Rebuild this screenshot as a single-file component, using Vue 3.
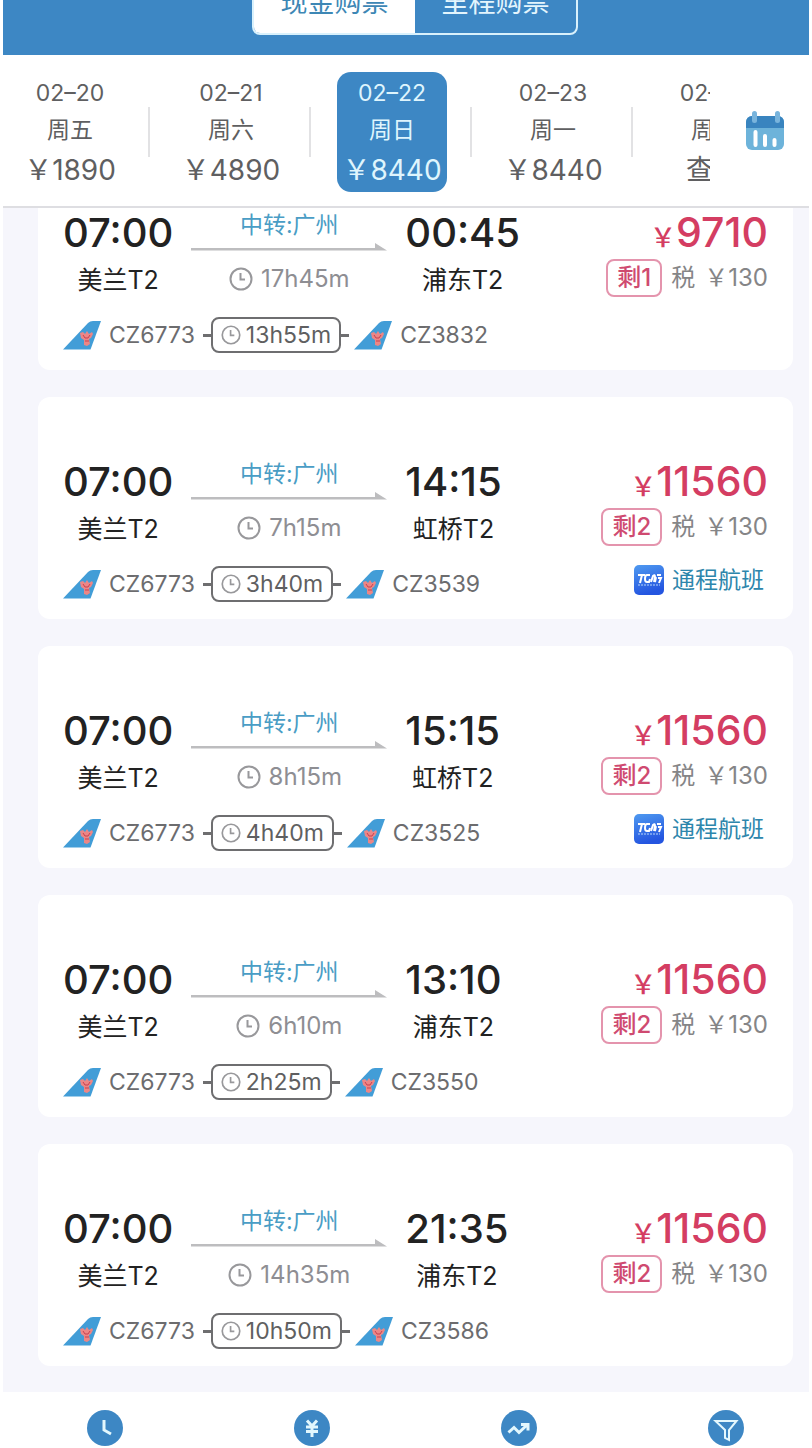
<template>
  <div class="page">
    <header class="header">
      <div class="segment">
        <button
          v-for="mode in modes"
          :key="mode"
          class="segment-btn"
          :class="{ active: mode === currentMode }"
          @click="currentMode = mode"
        >
          {{ mode }}
        </button>
      </div>
    </header>

    <nav class="dates">
      <div class="date-scroll">
        <div v-for="day in days" :key="day.date" class="date-cell">
          <button
            class="date-btn"
            :class="{ active: day.date === currentDate }"
            @click="currentDate = day.date"
          >
            <span class="date-day">{{ day.date }}</span>
            <span class="date-week">{{ day.week }}</span>
            <span class="date-price">{{ day.price }}</span>
          </button>
        </div>
      </div>
      <button class="calendar-btn" aria-label="日历">
        <svg width="40" height="40" viewBox="0 0 40 40">
          <rect x="1" y="5" width="38" height="34" rx="6" fill="#6db3da" />
          <path d="M1 17V11a6 6 0 0 1 6-6h26a6 6 0 0 1 6 6v6z" fill="#3984bf" />
          <rect x="7" y="0" width="5" height="12" rx="2.5" fill="#79b4dc" />
          <rect x="30" y="0" width="5" height="12" rx="2.5" fill="#79b4dc" />
          <path
            d="M10.500 21v13M20 25v9M29.500 29v5"
            stroke="#fff"
            stroke-width="4"
            stroke-linecap="round"
          />
        </svg>
      </button>
    </nav>

    <main class="list">
      <article v-for="flight in flights" :key="flight.second" class="card">
        <div class="summary">
          <div class="stop">
            <div class="time">07:00</div>
            <div class="station">美兰T2</div>
          </div>

          <div class="route">
            <div class="via">中转:广州</div>
            <svg class="arrow" width="196" height="8" viewBox="0 0 196 8">
              <path d="M0 5H184V0L196 7.500H0z" fill="#bdbdbf" />
            </svg>
            <div class="duration">
              <svg width="24" height="24" viewBox="0 0 24 24" class="clock">
                <circle cx="12" cy="12" r="10.500" />
                <path d="M11.500 6v6.500H16" />
              </svg>
              {{ flight.duration }}
            </div>
          </div>

          <div class="stop">
            <div class="time">{{ flight.arrive }}</div>
            <div class="station">{{ flight.station }}</div>
          </div>

          <div class="fare">
            <div class="price"><span class="yen">￥</span>{{ flight.price }}</div>
            <div class="tax">
              <span class="left">剩{{ flight.left }}</span>
              <span>税</span>
              <span>￥130</span>
            </div>
          </div>
        </div>

        <div class="legs">
          <svg class="tail" width="38" height="29" viewBox="0 0 38 29">
            <path d="M0 28.500 25 2q2-2 5-2h8L27.500 28.500z" fill="#429dd7" />
            <path
              d="M17 12l3-1 2 2 2-3 2 3 3-2 1 2-2 4-2 1 1 5-3 2-3-1v-5l-3-2z"
              fill="#ec8686"
            />
            <path d="M20 14l2 3h3l2-3M22 20h4" fill="none" stroke="#c9404f" />
          </svg>
          <span class="flight-no">CZ6773</span>
          <span class="link"></span>
          <span class="layover">
            <svg width="20" height="20" viewBox="0 0 24 24" class="clock">
              <circle cx="12" cy="12" r="10.500" />
              <path d="M11.500 6v6.500H16" />
            </svg>
            {{ flight.layover }}
          </span>
          <span class="link"></span>
          <svg class="tail second" width="38" height="29" viewBox="0 0 38 29">
            <path d="M0 28.500 25 2q2-2 5-2h8L27.500 28.500z" fill="#429dd7" />
            <path
              d="M17 12l3-1 2 2 2-3 2 3 3-2 1 2-2 4-2 1 1 5-3 2-3-1v-5l-3-2z"
              fill="#ec8686"
            />
            <path d="M20 14l2 3h3l2-3M22 20h4" fill="none" stroke="#c9404f" />
          </svg>
          <span class="flight-no">{{ flight.second }}</span>
          <span v-if="flight.through" class="through">
            <svg width="30" height="30" viewBox="0 0 30 30">
              <defs>
                <linearGradient id="through-bg" x1="0" y1="0" x2="0.300" y2="1">
                  <stop offset="0" stop-color="#4f9af0" />
                  <stop offset="1" stop-color="#2455e0" />
                </linearGradient>
              </defs>
              <rect width="30" height="30" rx="5" fill="url(#through-bg)" />
              <g fill="none" stroke="#fff" stroke-width="2">
                <path d="M4 10h7M8 10l-2 8" />
                <path d="M16 10h-3q-2 0-2 4 0 3 2 3h2l1-3" />
                <path d="M17 17l2-6q2-2 2 1l-1 5M22 12l-1 5M23 10h4M24 13h3l-2 5" />
              </g>
              <path d="M4 20h22" stroke="#b9d5fb" stroke-dasharray="2 1" />
            </svg>
            通程航班
          </span>
        </div>
      </article>
    </main>

    <footer class="toolbar">
      <button class="tool" aria-label="时间">
        <svg width="36" height="36" viewBox="0 0 36 36">
          <circle cx="18" cy="18" r="18" />
          <path d="M17 10v10l7 4" />
        </svg>
      </button>
      <button class="tool" aria-label="价格">
        <svg width="36" height="36" viewBox="0 0 36 36">
          <circle cx="18" cy="18" r="18" />
          <path d="M13 10.500l5 5.500 5-5.500M12 17h12M12 21.500h12M18 16v11" />
        </svg>
      </button>
      <button class="tool" aria-label="趋势">
        <svg width="36" height="36" viewBox="0 0 36 36">
          <circle cx="18" cy="18" r="18" />
          <path d="M7.500 22.500l5.500-5 5 5 8-7.500M20 14.500h7v6" />
        </svg>
      </button>
      <button class="tool" aria-label="筛选">
        <svg width="36" height="36" viewBox="0 0 36 36">
          <circle cx="18" cy="18" r="18" />
          <path class="funnel" d="M7.500 11h21L21 20v10l-4-2v-8z" />
        </svg>
      </button>
    </footer>
  </div>
</template>

<script setup>
import { ref } from "vue";

const modes = ["现金购票", "里程购票"];
const currentMode = ref("现金购票");
const currentDate = ref("02–22");

const days = [
  { date: "02–20", week: "周五", price: "￥1890" },
  { date: "02–21", week: "周六", price: "￥4890" },
  { date: "02–22", week: "周日", price: "￥8440" },
  { date: "02–23", week: "周一", price: "￥8440" },
  { date: "02–24", week: "周二", price: "查看" },
];

const flights = [
  { arrive: "00:45", station: "浦东T2", duration: "17h45m", layover: "13h55m", second: "CZ3832", price: 9710, left: 1 },
  { arrive: "14:15", station: "虹桥T2", duration: "7h15m", layover: "3h40m", second: "CZ3539", price: 11560, left: 2, through: true },
  { arrive: "15:15", station: "虹桥T2", duration: "8h15m", layover: "4h40m", second: "CZ3525", price: 11560, left: 2, through: true },
  { arrive: "13:10", station: "浦东T2", duration: "6h10m", layover: "2h25m", second: "CZ3550", price: 11560, left: 2 },
  { arrive: "21:35", station: "浦东T2", duration: "14h35m", layover: "10h50m", second: "CZ3586", price: 11560, left: 2 },
];
</script>

<style>
body {
  background: #fff;
}
</style>

<style scoped>
* {
  box-sizing: border-box;
}

.page {
  padding: 0 3px;
  overflow: hidden;
  font-family: Inter, "Noto Sans CJK SC", sans-serif;
  color: #222;
}

button {
  padding: 0;
  border: none;
  background: none;
  font-family: inherit;
  color: inherit;
  cursor: pointer;
}

.header {
  display: flex;
  justify-content: center;
  height: 55px;
  background: #3d87c4;
}

/* the switch slides under the top edge */
.segment {
  display: flex;
  width: 326px;
  height: 64px;
  margin-top: -29px;
  margin-left: 18px;
  border: 2px solid #d9f1fc;
  border-radius: 8px;
  overflow: hidden;
}

.segment-btn {
  flex: 1;
  font-size: 27px;
  line-height: 60px;
  color: #e3f5fd;
}

.segment-btn.active {
  background: #fff;
  color: #3d87b5;
}

.dates {
  display: flex;
  height: 153px;
  border-bottom: 2px solid #dedee2;
}

.date-scroll {
  display: flex;
  flex: 1;
  overflow: hidden;
}

.date-cell {
  display: flex;
  flex: 0 0 161px;
  align-items: center;
  justify-content: center;
  height: 153px;
}

.date-cell:first-child {
  margin-left: -15px;
}

.date-cell::after {
  content: "";
  width: 2px;
  height: 50px;
  margin-left: 23px;
  margin-right: -2px;
  background: #e2e2e4;
}

.date-btn {
  display: flex;
  flex-direction: column;
  align-items: center;
  width: 110px;
  height: 120px;
  margin-left: 26px;
  border-radius: 14px;
  color: #5f5f61;
  white-space: nowrap;
}

.date-btn.active {
  background: #3d87c4;
  color: #dff5fd;
}

.date-day {
  font-size: 23px;
  line-height: 42px;
}

.date-week {
  font-size: 23px;
  line-height: 32px;
}

.date-price {
  font-size: 28px;
  line-height: 48px;
}

.calendar-btn {
  width: 99px;
  padding: 4px 0 0 10px;
}

.list {
  display: flex;
  flex-direction: column;
  gap: 27px;
  padding: 0 16px 26px 35px;
  background: #f6f6fc;
  overflow: hidden;
}

.card {
  height: 222px;
  padding: 60px 25px 0;
  border-radius: 12px;
  background: #fff;
}

/* the list is scrolled a little under the date bar */
.card:first-child {
  margin-top: -60px;
}

.summary {
  display: flex;
}

.stop {
  text-align: center;
}

.time {
  font-size: 40px;
  font-weight: 500;
  line-height: 50px;
}

.station {
  font-size: 25px;
  line-height: 44px;
}

.route {
  display: flex;
  flex-direction: column;
  align-items: center;
  margin: 0 18px;
}

.via {
  font-size: 23px;
  line-height: 34px;
  color: #4a9dc5;
}

.arrow {
  margin: 1px 0 6px;
}

.duration {
  display: flex;
  align-items: center;
  gap: 8px;
  font-size: 24px;
  line-height: 44px;
  color: #8e8e93;
}

.clock {
  fill: none;
  stroke: #98989b;
  stroke-width: 2;
}

.fare {
  margin-left: auto;
}

.price {
  display: flex;
  align-items: flex-end;
  justify-content: flex-end;
  font-size: 41px;
  font-weight: 500;
  line-height: 48px;
  color: #d43d62;
}

.yen {
  font-size: 26px;
  line-height: 36px;
}

.tax {
  display: flex;
  align-items: center;
  justify-content: flex-end;
  gap: 9px;
  font-size: 24px;
  line-height: 44px;
  color: #858587;
}

.left {
  padding: 0 9px;
  border: 2px solid #e494ad;
  border-radius: 8px;
  line-height: 34px;
  font-weight: 500;
  color: #cf4a70;
}

.legs {
  display: flex;
  align-items: center;
  height: 36px;
  margin-top: 15px;
}

.flight-no {
  margin-left: 8px;
  font-size: 23px;
  color: #6c6c6e;
}

.link {
  width: 8px;
  height: 3px;
  background: #6e6e70;
}

.flight-no + .link {
  margin-left: 8px;
}

.layover {
  display: flex;
  align-items: center;
  gap: 5px;
  height: 36px;
  padding: 0 8px;
  border: 2px solid #6e6e70;
  border-radius: 8px;
  font-size: 23px;
  color: #5f5f61;
}

.tail.second {
  margin-left: 5px;
}

.through {
  display: flex;
  align-items: center;
  gap: 8px;
  margin-left: auto;
  margin-bottom: 8px;
  padding-right: 4px;
  font-size: 23px;
  line-height: 30px;
  color: #2d86ac;
}

.toolbar {
  display: flex;
  justify-content: space-between;
  padding: 18px 65px 2px 84px;
  background: #fff;
}

.tool {
  height: 36px;
}

.tool svg {
  display: block;
  fill: none;
  stroke: #e3f7fd;
  stroke-width: 3;
}

.tool circle {
  fill: #3d87c4;
  stroke: none;
}

.tool .funnel {
  stroke-width: 2;
}
</style>
